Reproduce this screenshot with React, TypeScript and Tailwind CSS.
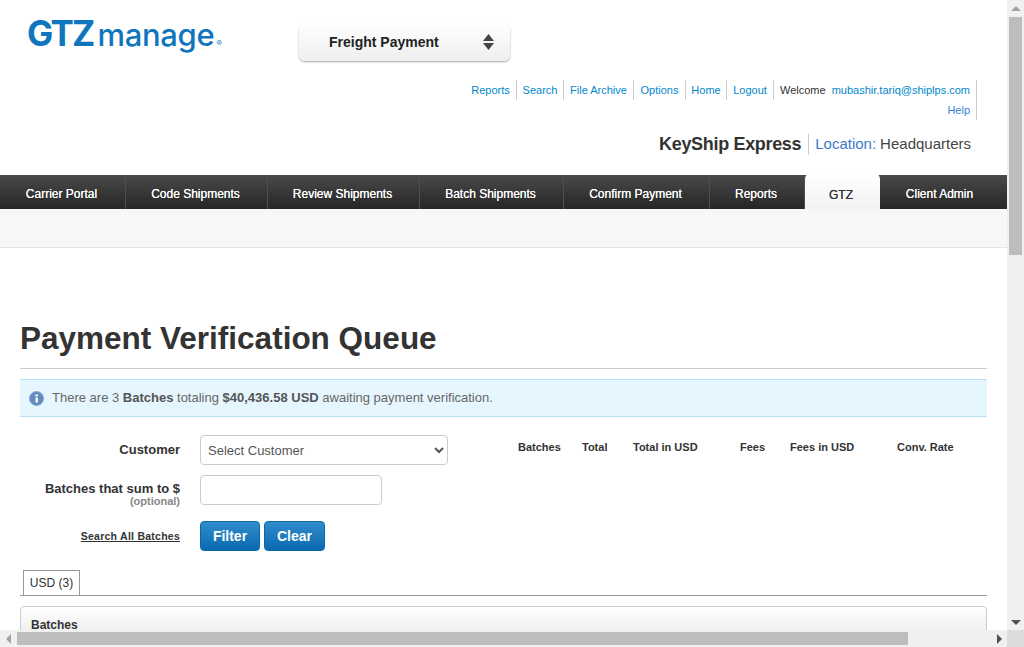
import React from "react";

const font = "font-['Liberation_Sans',Arial,sans-serif]";
const topLinks = [
  { t: "Reports", w: "w-[52px]" },
  { t: "Search", w: "w-[47px]" },
  { t: "File Archive", w: "w-[70px]" },
  { t: "Options", w: "w-[52px]" },
  { t: "Home", w: "w-[41px]" },
  { t: "Logout", w: "w-[47px]" },
];
const nav = [
  { t: "Carrier Portal", w: "w-[126px]" },
  { t: "Code Shipments", w: "w-[142px]" },
  { t: "Review Shipments", w: "w-[152px]" },
  { t: "Batch Shipments", w: "w-[144px]" },
  { t: "Confirm Payment", w: "w-[146px]" },
  { t: "Reports", w: "w-[95px]" },
];
const cols = [
  { t: "Batches", w: "w-[64px]" },
  { t: "Total", w: "w-[51px]" },
  { t: "Total in USD", w: "w-[107px]" },
  { t: "Fees", w: "w-[50px]" },
  { t: "Fees in USD", w: "w-[107px]" },
  { t: "Conv. Rate", w: "w-[70px]" },
];

function Arrow({ d }: { d: "up" | "down" | "left" | "right" }) {
  const pts = { up: "0,7 5,2 10,7", down: "0,3 10,3 5,8", left: "7,0 7,10 2,5", right: "3,0 3,10 8,5" }[d];
  return (
    <svg width="10" height="10" viewBox="0 0 10 10">
      <polygon points={pts} fill={d === "up" || d === "left" ? "#a3a3a3" : "#505050"} />
    </svg>
  );
}

export default function App() {
  return (
    <div className={`${font} w-[1024px] h-[647px] overflow-hidden flex flex-col bg-white text-[#333]`}>
      <div className="flex h-[630px]">
        <main className="w-[1007px] h-[630px] overflow-hidden">
          {/* header */}
          <header className="h-[175px] flex flex-col">
            <div className="flex h-[80px]">
              <div className="w-[299px] h-[50px] pl-[27px] pt-[11px] flex items-baseline text-[#0f75bc] font-['Inter',sans-serif] leading-none">
                <span className="text-[35px] leading-[44px] font-bold tracking-[-1.8px]">GTZ</span>
                <span className="text-[31px] font-medium ml-[4px] tracking-[-0.3px]">manage</span>
                <span className="text-[8px] ml-[2px]">®</span>
              </div>
              <div className="mt-[23px] w-[211px] h-[38px] rounded-[6px] bg-gradient-to-b from-white to-[#eeeeee] shadow-[0_1px_2px_rgba(0,0,0,0.35)] flex items-center justify-between pl-[30px] pr-[16px]">
                <span className="text-[14px] font-bold text-[#222]">Freight Payment</span>
                <svg width="11" height="16" viewBox="0 0 11 16">
                  <polygon points="5.5,0 11,7 0,7" fill="#444" />
                  <polygon points="0,9 11,9 5.5,16" fill="#444" />
                </svg>
              </div>
            </div>
            <div className="flex flex-col items-end pr-[30px] text-[11px]">
              <div className="flex h-[20px] items-center">
                {topLinks.map((l) => (
                  <a key={l.t} className={`h-[20px] leading-[20px] text-center border-r border-[#ccc] text-[#0088cc] ${l.w}`}>{l.t}</a>
                ))}
                <span className="h-[20px] leading-[20px] pl-[6px] pr-[6px] text-[#333]">Welcome</span>
                <a className="h-[20px] leading-[20px] pr-[6px] border-r border-[#ccc] text-[#0088cc]">mubashir.tariq@shiplps.com</a>
              </div>
              <a className="h-[20px] leading-[20px] pr-[6px] border-r border-[#ccc] text-[#3a7fd5]">Help</a>
            </div>
            <div className="flex justify-end items-center pr-[36px] mt-[14px] h-[21px]">
              <span className="text-[18px] font-bold text-[#333] pr-[7px] border-r border-[#ccc] leading-[21px] tracking-[-0.33px]">KeyShip Express</span>
              <span className="text-[15px] text-[#3a7bc8] pl-[6px]">Location:</span>
              <span className="text-[15px] text-[#444] pl-[4px]">Headquarters</span>
            </div>
          </header>

          {/* nav */}
          <nav className="h-[34px] flex bg-gradient-to-b from-[#4a4a4a] to-[#262626] text-[12px] text-white">
            {nav.map((n) => (
              <a key={n.t} className={`${n.w} h-[34px] pt-[3px] pr-[2px] flex items-center justify-center border-r border-[#4f4f4f] [text-shadow:0_0_0.4px_#fff]`}>{n.t}</a>
            ))}
            <div className="w-[75px] h-[36px] -mt-[2px] rounded-t-[6px] bg-gradient-to-b from-white to-[#f2f2f2] text-[#333] flex items-center justify-center pt-[7px] pr-[3px] [text-shadow:0_0_0.4px_#333]">GTZ</div>
            <a className="flex-1 h-[34px] pt-[3px] pr-[8px] flex items-center justify-center [text-shadow:0_0_0.4px_#fff]">Client Admin</a>
          </nav>
          <div className="h-[39px] bg-[#f7f7f7] border-b border-[#e5e5e5]" />

          {/* content */}
          <div className="px-[20px]">
            <h1 className="mt-[70px] text-[31.5px] font-bold leading-[40px] text-[#333]">Payment Verification Queue</h1>
            <div className="mt-[10px] border-t border-[#ccc]" />
            <div className="mt-[10px] h-[38px] bg-[#e6f6fe] border-y border-[#b5e3f5] flex items-center pl-[9px] text-[13px] text-[#666]">
              <svg width="15" height="15" viewBox="0 0 15 15" className="mr-[8px]">
                <circle cx="7.5" cy="7.5" r="7" fill="#5f8bbd" stroke="#8aa9cc" />
                <rect x="6.5" y="6.5" width="2.4" height="5" fill="#fff" />
                <rect x="6.5" y="3.4" width="2.4" height="2" fill="#fff" />
              </svg>
              <span>
                There are 3 <b className="text-[#555]">Batches</b> totaling <b className="text-[#555]">$40,436.58 USD</b> awaiting payment verification.
              </span>
            </div>

            <div className="flex mt-[18px]">
              <div className="w-[428px] flex flex-col">
                <div className="flex items-center h-[30px]">
                  <label className="w-[160px] text-right text-[13px] font-bold text-[#333] -mt-[1px]">Customer</label>
                  <select className="ml-[20px] w-[248px] h-[30px] border border-[#ccc] rounded-[4px] bg-white pl-[3px] text-[13px] text-[#555]">
                    <option>Select Customer</option>
                  </select>
                </div>
                <div className="flex items-center h-[30px] mt-[10px]">
                  <label className="w-[160px] text-right font-normal flex flex-col pt-[8px]">
                    <span className="text-[13px] font-bold leading-[15px] text-[#333]">Batches that sum to $</span>
                    <span className="text-[11px] font-bold leading-[11px] text-[#888]">(optional)</span>
                  </label>
                  <input className="ml-[20px] w-[182px] h-[30px] border border-[#ccc] rounded-[4px] bg-white" />
                </div>
                <div className="flex items-center h-[30px] mt-[16px]">
                  <a className="w-[160px] pt-[1px] text-right text-[10.5px] font-bold underline text-[#333] tracking-[0.25px]">Search All Batches</a>
                  <button className="ml-[20px] w-[60px] h-[30px] pt-[1px] rounded-[4px] border border-[#0a69a8] bg-gradient-to-b from-[#2f8dcb] to-[#0769b1] text-white text-[14px] font-bold">Filter</button>
                  <button className="ml-[4px] w-[61px] h-[30px] pt-[1px] rounded-[4px] border border-[#0a69a8] bg-gradient-to-b from-[#2f8dcb] to-[#0769b1] text-white text-[14px] font-bold">Clear</button>
                </div>
              </div>
              <div className="ml-[70px] flex h-[24px] items-center text-[11px] font-bold text-[#333]">
                {cols.map((c) => (
                  <span key={c.t} className={c.w}>{c.t}</span>
                ))}
              </div>
            </div>

            <div className="mt-[19px] border-b border-[#999] h-[26px] pl-[3px]">
              <div className="w-[57px] h-[25px] border border-b-0 border-[#999] bg-white flex items-center justify-center text-[12px] text-[#333]">USD (3)</div>
            </div>
            <div className="mt-[10px] h-[40px] border border-[#ccc] rounded-t-[4px] bg-gradient-to-b from-white to-[#e6e6e6] pl-[10px] pt-[11px] text-[12px] leading-[14px] font-bold text-[#333]">Batches</div>
          </div>
        </main>
        {/* vertical scrollbar */}
        <div className="w-[17px] bg-[#f0f0f0] flex flex-col items-center">
          <div className="h-[17px] flex items-center justify-center"><Arrow d="up" /></div>
          <div className="w-[13px] h-[238px] bg-[#bdbdbd]" />
          <div className="flex-1" />
          <div className="h-[17px] flex items-center justify-center"><Arrow d="down" /></div>
        </div>
      </div>
      {/* horizontal scrollbar */}
      <div className="h-[17px] flex bg-[#f0f0f0]">
        <div className="w-[17px] flex items-center justify-center"><Arrow d="left" /></div>
        <div className="w-[891px] h-[13px] mt-[2px] bg-[#bdbdbd]" />
        <div className="flex-1" />
        <div className="w-[17px] flex items-center justify-center"><Arrow d="right" /></div>
        <div className="w-[17px] bg-[#dcdcdc]" />
      </div>
    </div>
  );
}
